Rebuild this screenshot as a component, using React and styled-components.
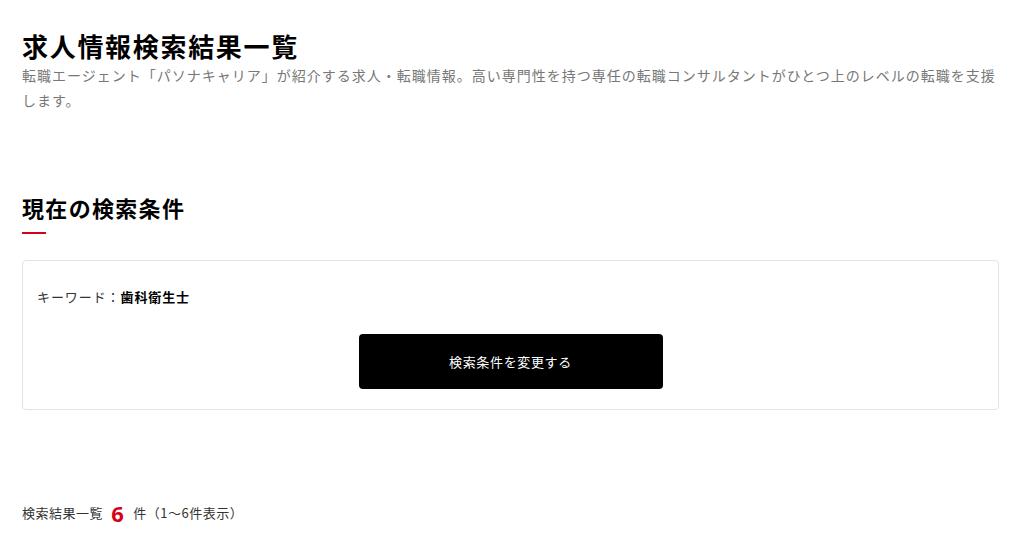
import React from "react";
import styled, { createGlobalStyle } from "styled-components";

const GlobalStyle = createGlobalStyle`
  body {
    margin: 0;
    background: #fff;
    font-family: "Noto Sans CJK JP", "Noto Sans", sans-serif;
    color: #000;
  }
`;

const Page = styled.main`
  padding: 29px 25px 10px 22px;
`;

const Title = styled.h1`
  margin: 0;
  font-size: 26px;
  line-height: 34px;
  font-weight: 700;
  letter-spacing: 0.065em;
`;

const Lead = styled.p`
  margin: 0;
  font-size: 14px;
  line-height: 25px;
  color: #777;
  letter-spacing: 1px;
`;

const SectionTitle = styled.h2`
  margin: 78px 0 0;
  font-size: 22px;
  line-height: 32px;
  font-weight: 700;
  letter-spacing: 0.06em;
`;

const Accent = styled.div`
  width: 24px;
  height: 2px;
  margin-top: 9px;
  background: #d7001a;
`;

const ConditionCard = styled.section`
  margin-top: 26px;
  border: 1px solid #e3e3e3;
  border-radius: 4px;
  padding: 26px 14px 20px;
  display: flex;
  flex-direction: column;
`;

const Condition = styled.div`
  font-size: 13px;
  line-height: 20px;
  color: #333;
  letter-spacing: 0.07em;

  strong {
    color: #000;
    font-weight: 700;
  }
`;

const ChangeButton = styled.button`
  align-self: center;
  margin-top: 27px;
  width: 304px;
  height: 55px;
  border: none;
  border-radius: 4px;
  background: #000;
  color: #fff;
  font-family: inherit;
  font-size: 13px;
  letter-spacing: 0.05em;
  cursor: pointer;
`;

const ResultCount = styled.div`
  margin-top: 88px;
  display: flex;
  align-items: center;
  font-size: 13px;
  line-height: 30px;
  color: #333;
  letter-spacing: 0.04em;
`;

const Count = styled.span`
  margin: 0 9px 0 8px;
  font-family: "Noto Sans", sans-serif;
  font-size: 22px;
  font-weight: 700;
  color: #d7001a;
`;

export default function App() {
  return (
    <>
      <GlobalStyle />
      <Page>
        <Title>求人情報検索結果一覧</Title>
        <Lead>
          転職エージェント「パソナキャリア」が紹介する求人・転職情報。高い専門性を持つ専任の転職コンサルタントがひとつ上のレベルの転職を支援します。
        </Lead>

        <SectionTitle>現在の検索条件</SectionTitle>
        <Accent />

        <ConditionCard>
          <Condition>
            キーワード：<strong>歯科衛生士</strong>
          </Condition>
          <ChangeButton>検索条件を変更する</ChangeButton>
        </ConditionCard>

        <ResultCount>
          検索結果一覧<Count>6</Count>件（1〜6件表示）
        </ResultCount>
      </Page>
    </>
  );
}
